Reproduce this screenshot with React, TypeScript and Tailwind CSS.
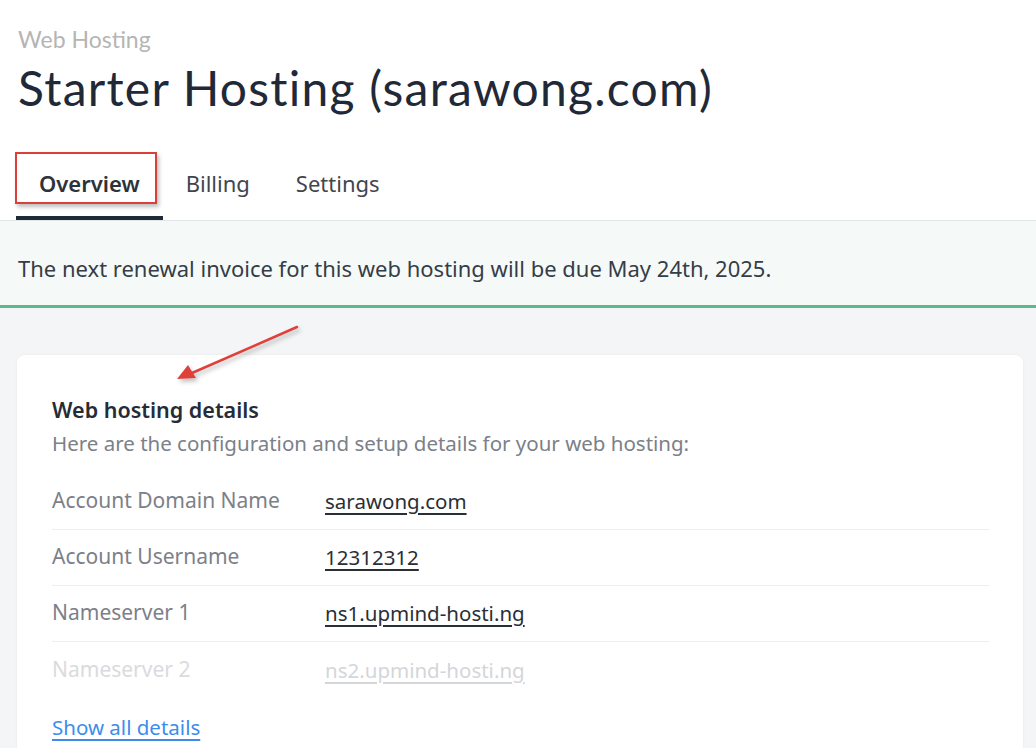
import React from "react";

const rows = [
  { label: "Account Domain Name", value: "sarawong.com" },
  { label: "Account Username", value: "12312312" },
  { label: "Nameserver 1", value: "ns1.upmind-hosti.ng" },
];

export default function App() {
  return (
    <div className="relative flex h-[748px] w-[1036px] flex-col overflow-hidden bg-white font-['Noto_Sans',sans-serif] text-[#374151]">
      {/* Header */}
      <div className="shrink-0 px-[18px] pt-[26px]">
        <div className="font-['Lato',sans-serif] text-[23px] leading-[26px] text-[#b5b5b5]">Web Hosting</div>
        <h1 className="mt-[8px] font-['Lato',sans-serif] text-[48px] font-normal leading-[56px] tracking-[1.25px] text-[#1f2937]">
          Starter Hosting (sarawong.com)
        </h1>
      </div>

      {/* Tabs */}
      <div className="mt-[42px] flex shrink-0 border-b border-[#e2e5e8] px-[16px]">
        <button className="border-b-4 border-[#1f2937] px-[23px] pb-[18px] pt-[10px] text-[22px] font-semibold leading-[30px] text-[#2d333b]">
          Overview
        </button>
        <button className="border-b-4 border-transparent px-[23px] pb-[18px] pt-[10px] text-[22px] leading-[30px] text-[#3f4650]">
          Billing
        </button>
        <button className="border-b-4 border-transparent px-[23px] pb-[18px] pt-[10px] text-[22px] leading-[30px] text-[#3f4650]">
          Settings
        </button>
      </div>

      {/* Renewal banner */}
      <div className="flex h-[87px] shrink-0 items-center border-b-[3px] border-[#5db98c] bg-[#f5faf9] px-[18px] pt-[10px] text-[22px] text-[#363d47]">
        The next renewal invoice for this web hosting will be due May 24th, 2025.
      </div>

      {/* Content */}
      <div className="flex-1 bg-[#f4f5f7] pl-[17px] pr-[13px] pt-[47px]">
        <div className="rounded-[8px] bg-white px-[35px] pt-[40px] shadow-[0_0_3px_rgba(0,0,0,0.06)]">
          <h2 className="text-[21.5px] font-semibold leading-[30px] text-[#262c35]">Web hosting details</h2>
          <p className="mt-[3px] text-[20.5px] leading-[30px] text-[#7b8089]">
            Here are the configuration and setup details for your web hosting:
          </p>
          <div className="mt-[16px] w-[937px]">
            {rows.map((r) => (
              <div key={r.label} className="flex h-[56px] items-center border-b border-[#eceef0] pb-[1px]">
                <span className="w-[273px] text-[21px] text-[#7c8088]">{r.label}</span>
                <span className="text-[20.5px] text-[#2a2f37] underline underline-offset-[4px]">{r.value}</span>
              </div>
            ))}
            <div className="flex h-[56px] items-center">
              <span className="w-[273px] text-[21px] text-[#d9dbde]">Nameserver 2</span>
              <span className="text-[20.5px] text-[#d4d6d9] underline underline-offset-[4px]">ns2.upmind-hosti.ng</span>
            </div>
          </div>
          <a href="#" className="mt-[15px] block pb-[30px] text-[20.5px] leading-[28px] text-[#3b8ded] underline underline-offset-[4px]">
            Show all details
          </a>
        </div>
      </div>

      {/* Annotation: red box around Overview tab */}
      <div className="pointer-events-none absolute left-[15px] top-[152px] h-[52px] w-[142px] border-2 border-[#d9403a] shadow-[2px_3px_4px_rgba(0,0,0,0.25)]" />

      {/* Annotation: arrow */}
      <svg className="pointer-events-none absolute left-[160px] top-[318px]" width="150" height="72" viewBox="0 0 150 72">
        <defs>
          <filter id="sh" x="-20%" y="-40%" width="140%" height="180%">
            <feDropShadow dx="2" dy="3" stdDeviation="2" floodColor="#000" floodOpacity="0.25" />
          </filter>
        </defs>
        <g filter="url(#sh)">
          <line x1="137" y1="9" x2="32" y2="55" stroke="#e0413a" strokeWidth="2.5" strokeLinecap="round" />
          <polygon points="17,61 28,47 36,60" fill="#e0413a" />
        </g>
      </svg>
    </div>
  );
}
